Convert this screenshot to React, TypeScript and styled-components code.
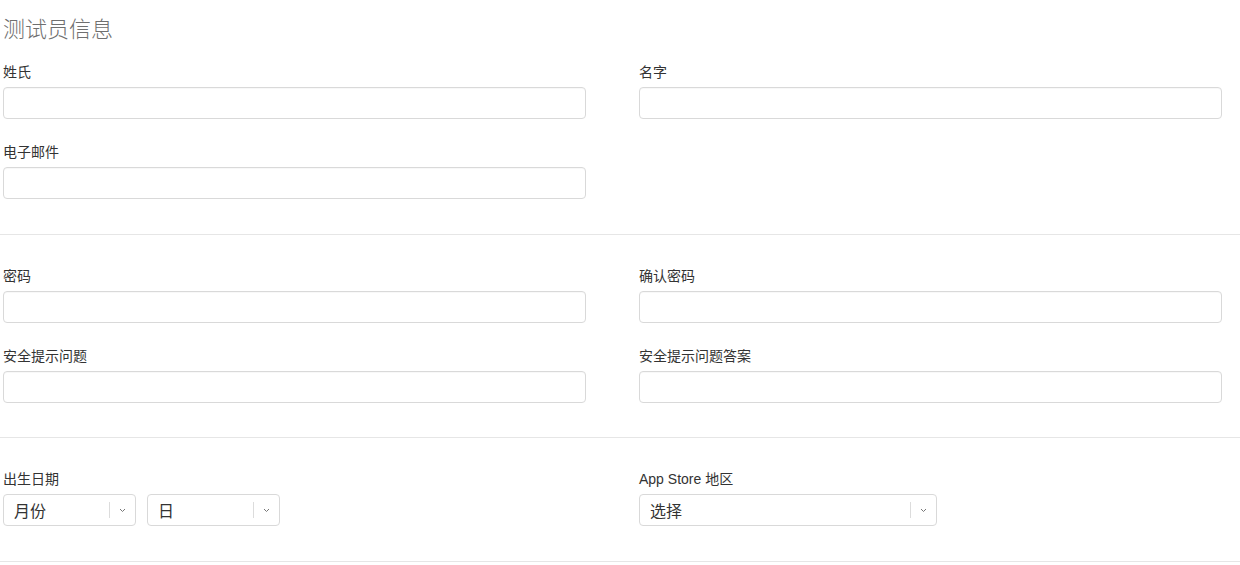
import React from 'react';
import styled, { createGlobalStyle } from 'styled-components';

const GlobalStyle = createGlobalStyle`
  html, body {
    margin: 0;
    padding: 0;
    background: #fff;
  }
  body {
    font-family: "Helvetica Neue", "Liberation Sans", "Noto Sans CJK SC", sans-serif;
    color: #333;
  }
`;

const Page = styled.div`
  width: 1240px;
`;

const Section = styled.section<{ $first?: boolean; $bottom?: number }>`
  padding: ${({ $first }) => ($first ? '15px' : '32px')} 18px ${({ $bottom }) => $bottom ?? 35}px 3px;
  border-bottom: 1px solid #e6e6e6;
`;

const Title = styled.h2`
  margin: 0 0 18px;
  font-size: 22px;
  line-height: 30px;
  font-weight: 300;
  color: #6f6f6f;
`;

const Grid = styled.div`
  display: grid;
  grid-template-columns: 583px 583px;
  column-gap: 53px;
  row-gap: 24px;
`;

const Field = styled.div`
  display: flex;
  flex-direction: column;
  gap: 6px;
`;

const Label = styled.label`
  font-size: 14px;
  line-height: 18px;
  color: #333;
`;

const Input = styled.input`
  box-sizing: border-box;
  width: 100%;
  height: 32px;
  border: 1px solid #d9d9d9;
  border-radius: 4px;
  background: #fff;
  box-shadow: inset 0 1px 1px rgba(0, 0, 0, 0.03);
  outline: none;
  font: inherit;
`;

const SelectRow = styled.div`
  display: flex;
  gap: 11px;
`;

const SelectBox = styled.div<{ $width: number }>`
  box-sizing: border-box;
  width: ${({ $width }) => $width}px;
  height: 32px;
  border: 1px solid #d9d9d9;
  border-radius: 4px;
  background: #fff;
  display: flex;
  align-items: center;
  padding-left: 10px;
`;

const SelectValue = styled.span`
  flex: 1;
  font-size: 16px;
  color: #333;
`;

const Separator = styled.span`
  width: 1px;
  height: 16px;
  background: #dcdcdc;
`;

const Chevron = styled.span`
  width: 25px;
  display: flex;
  justify-content: center;
  align-items: center;
`;

const Select = ({ value, width }: { value: string; width: number }) => (
  <SelectBox $width={width}>
    <SelectValue>{value}</SelectValue>
    <Separator />
    <Chevron>
      <svg width="7" height="5" viewBox="0 0 7 5">
        <path d="M1 1l2.5 2.5L6 1" fill="none" stroke="#777" strokeWidth="1" />
      </svg>
    </Chevron>
  </SelectBox>
);

const TextField = ({ label }: { label: string }) => (
  <Field>
    <Label>{label}</Label>
    <Input type="text" />
  </Field>
);

const App = () => {
  return (
    <Page>
      <GlobalStyle />
      <Section $first>
        <Title>测试员信息</Title>
        <Grid>
          <TextField label="姓氏" />
          <TextField label="名字" />
          <TextField label="电子邮件" />
        </Grid>
      </Section>
      <Section $bottom={34}>
        <Grid>
          <TextField label="密码" />
          <TextField label="确认密码" />
          <TextField label="安全提示问题" />
          <TextField label="安全提示问题答案" />
        </Grid>
      </Section>
      <Section>
        <Grid>
          <Field>
            <Label>出生日期</Label>
            <SelectRow>
              <Select value="月份" width={133} />
              <Select value="日" width={133} />
            </SelectRow>
          </Field>
          <Field>
            <Label>App Store 地区</Label>
            <Select value="选择" width={298} />
          </Field>
        </Grid>
      </Section>
    </Page>
  );
};

export default App;
